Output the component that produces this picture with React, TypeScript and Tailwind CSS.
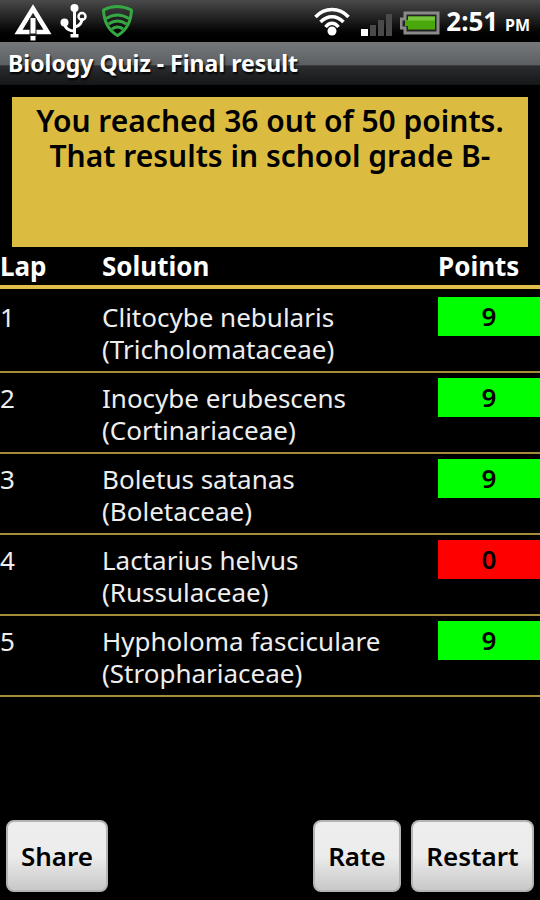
type Lap = {
  lap: number;
  species: string;
  family: string;
  points: number;
};

const laps: Lap[] = [
  { lap: 1, species: "Clitocybe nebularis", family: "Tricholomataceae", points: 9 },
  { lap: 2, species: "Inocybe erubescens", family: "Cortinariaceae", points: 9 },
  { lap: 3, species: "Boletus satanas", family: "Boletaceae", points: 9 },
  { lap: 4, species: "Lactarius helvus", family: "Russulaceae", points: 0 },
  { lap: 5, species: "Hypholoma fasciculare", family: "Strophariaceae", points: 9 },
];

const StatusBar = () => {
  return (
    <div className="flex h-[42px] items-center justify-between bg-linear-to-b from-[#4a4a4a] via-[#1c1c1c] to-black pl-3.5 pr-2.5">
      <div className="flex items-center">
        <svg width="38" height="40" viewBox="0 0 38 40" fill="none">
          <path d="M19 7.500 33.500 31H4.500Z" stroke="#fff" strokeWidth="4.500" />
          <path d="M15.500 17h7v19h-7z" fill="#1a1a1a" />
          <path d="M16.500 17h5v15.500h-5zM16.500 35h5v4.500h-5z" fill="#fff" />
        </svg>
        <svg width="30" height="40" viewBox="0 0 30 40" className="ml-2" fill="none">
          <path d="M14.500 8v26M4.500 22c0 6 6 8 10 8M22 17c0 6-3 8-7 9" stroke="#fff" strokeWidth="3" />
          <circle cx="14.500" cy="7" r="4" fill="#fff" />
          <circle cx="4.500" cy="21.500" r="4" fill="#fff" />
          <circle cx="22" cy="15.500" r="3.500" stroke="#fff" strokeWidth="2.500" />
          <path d="M10.500 33h8v3.500h-8z" fill="#fff" />
        </svg>
        <svg width="34" height="40" viewBox="0 0 34 40" className="ml-2.5" fill="none" stroke="#35a843" strokeWidth="3" strokeLinejoin="round">
          <path d="M3.500 9C12 4.500 22 4.500 31.500 9 31 21 27 29 17.500 34.500 8 29 4 21 3.500 9Z" />
          <path d="M6 17.500c8-5 15-5 23 0M8.500 23c6-4 12-4 18 0M12 28c4-3 7-3 11 0" />
        </svg>
      </div>
      <div className="flex items-center">
        <svg width="36" height="40" viewBox="0 0 36 40" fill="none" stroke="#fff" strokeWidth="3.500">
          <path d="M1.500 16c9-10 24-10 33 0M6.500 21c7-7 16-7 23 0M11.500 26c4-5 9-5 13 0" />
          <circle cx="18" cy="30" r="4.500" fill="#fff" stroke="none" />
        </svg>
        <svg width="32" height="40" viewBox="0 0 32 40" className="ml-2.5">
          <path d="M1 28h7v7H1z" fill="#fff" />
          <path d="M10 24h6v11h-6zM18 19h6v16h-6zM26 13h6v22h-6z" fill="#4a4a4a" />
        </svg>
        <svg width="40" height="40" viewBox="0 0 40 40" className="ml-2">
          <path d="M5 12h33v20H5v-5H1v-9h4z" fill="#222" stroke="#8a8a8a" strokeWidth="3" />
          <path d="M8 15.500h27v13H8V25H5v-6h3z" fill="#4aa80c" />
          <path d="M8 15.500h27v4H8z" fill="#76c43c" />
        </svg>
        <p className="ml-1.5 text-[26px] font-bold text-white">
          2:51 <span className="text-base">PM</span>
        </p>
      </div>
    </div>
  );
};

const buttonStyle =
  "h-[72px] rounded-lg border-2 border-[#b4b4b4] bg-linear-to-b from-[#eeeeee] via-[#ececec] to-[#c8c8c8] text-[26px] font-semibold text-black";

const App = () => {
  return (
    <div className="flex min-h-screen flex-col bg-black font-['Noto_Sans',sans-serif]">
      <StatusBar />
      <header className="flex h-[43px] items-center bg-[linear-gradient(#75797b,#5b5f61_54%,#2b2d2e_55%,#151617)] px-2">
        <h1 className="text-[23px] font-bold text-white [text-shadow:1px_2px_2px_#000]">
          Biology Quiz - Final result
        </h1>
      </header>

      <main className="flex grow flex-col">
        <p className="mx-3 mt-3 min-h-[150px] bg-[#dcbc40] px-4 pt-1.5 text-center text-[30px] leading-[35px] font-semibold text-black">
          You reached 36 out of 50 points.
          <br />
          That results in school grade B-
        </p>

        <table className="w-full table-fixed text-left text-[26px] leading-8 text-[#eeeeee]">
          <thead>
            <tr className="border-b-4 border-[#e2bf48] text-white">
              <th className="w-[102px] pt-[3px] pb-[3px]">Lap</th>
              <th className="pt-[3px] pb-[3px]">Solution</th>
              <th className="w-[102px] pt-[3px] pb-[3px]">Points</th>
            </tr>
          </thead>
          <tbody className="before:block before:h-[3px]">
            {laps.map(({ lap, species, family, points }) => (
              <tr key={lap} className="border-b-2 border-[#a48c38] align-top">
                <td className="pt-[9px] pb-1.5">{lap}</td>
                <td className="pt-[9px] pb-1.5">
                  {species}
                  <br />({family})
                </td>
                <td className="pt-[5px]">
                  <div
                    className={`h-[39px] pt-[3px] text-center font-semibold text-black ${
                      points > 0 ? "bg-[#00ff00]" : "bg-[#ff0000]"
                    }`}
                  >
                    {points}
                  </div>
                </td>
              </tr>
            ))}
          </tbody>
        </table>
      </main>

      <footer className="flex justify-between px-1.5 pb-2">
        <button className={`${buttonStyle} w-[102px]`}>Share</button>
        <div className="flex gap-2.5">
          <button className={`${buttonStyle} w-[88px]`}>Rate</button>
          <button className={`${buttonStyle} w-[123px]`}>Restart</button>
        </div>
      </footer>
    </div>
  );
};

export default App;
